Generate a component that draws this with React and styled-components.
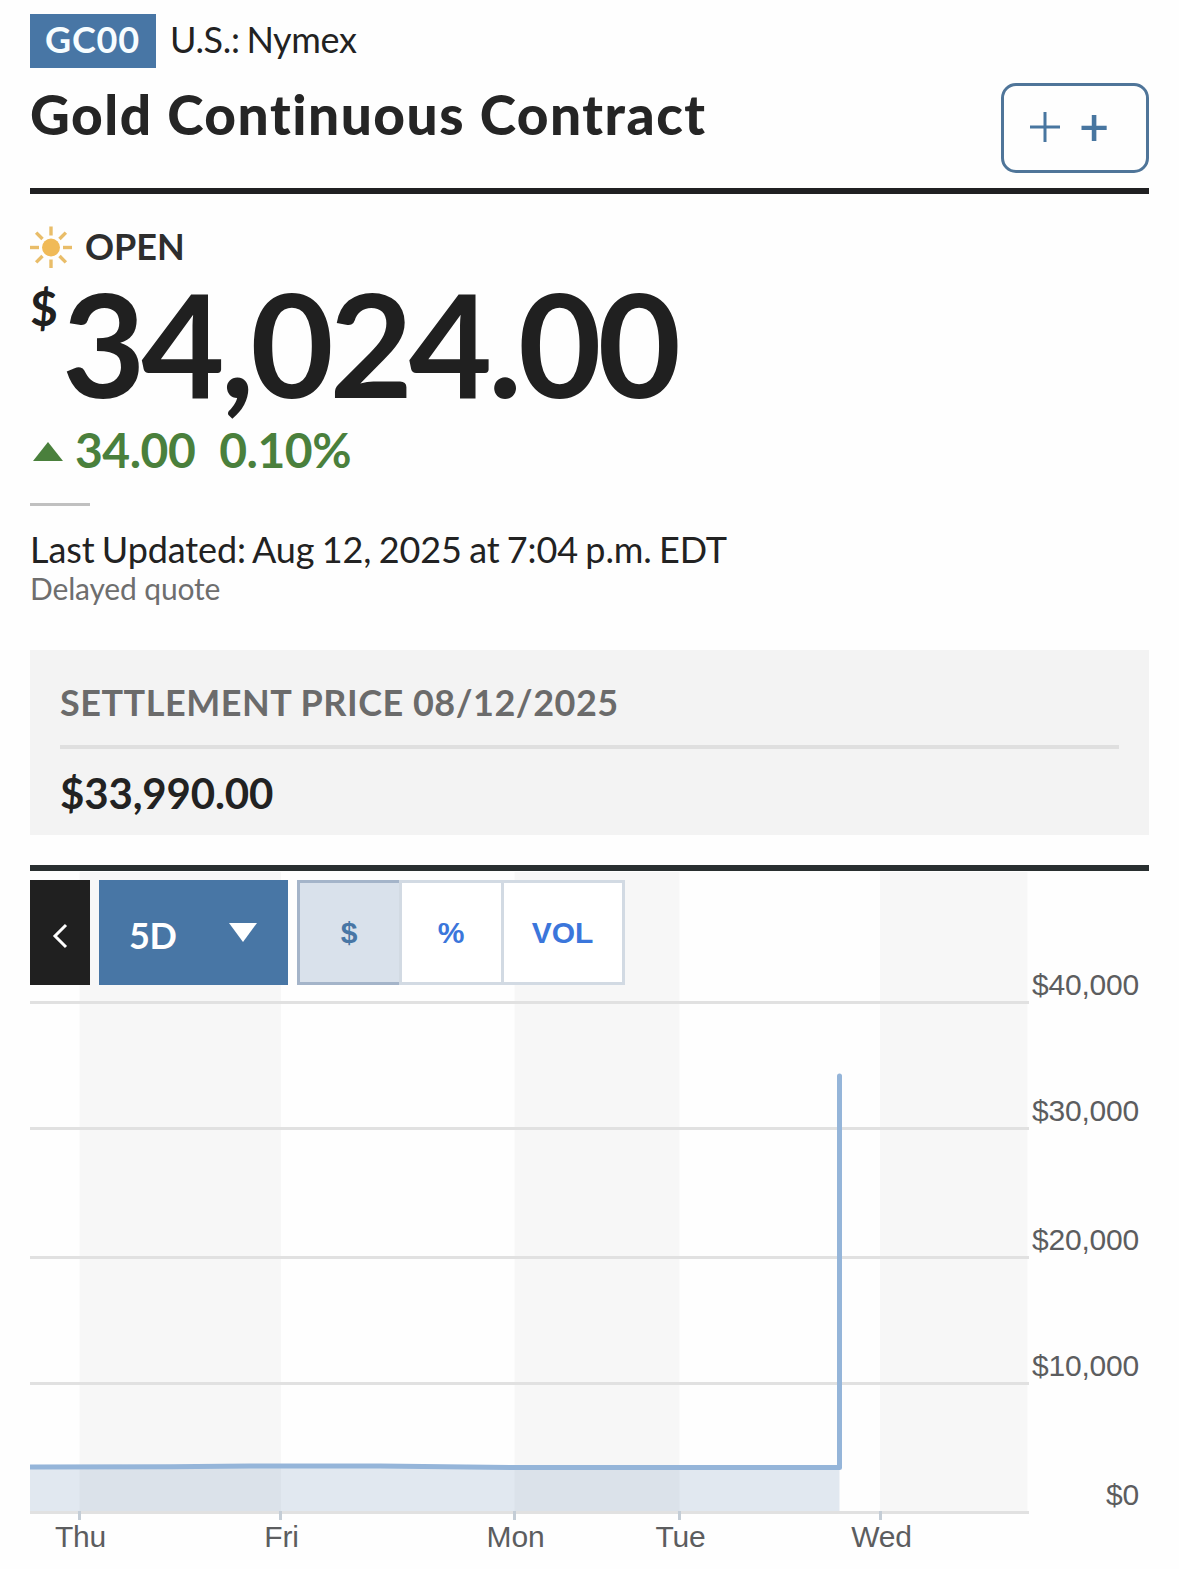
import React, { useState } from 'react';
import styled, { createGlobalStyle } from 'styled-components';

const GlobalStyle = createGlobalStyle`
  * {
    box-sizing: border-box;
  }

  body {
    margin: 0;
    background: #fefefe;
    color: #222222;
    font-family: Lato, sans-serif;
  }
`;

const Page = styled.main`
  display: flex;
  flex-direction: column;
  width: 1179px;
  height: 1569px;
  padding: 14px 30px 0;
  overflow: hidden;
`;

const SymbolRow = styled.div`
  display: flex;
  align-items: center;
  gap: 14px;
  height: 54px;
`;

const Ticker = styled.span`
  width: 126px;
  height: 54px;
  padding-left: 15px;
  background: #4876a5;
  color: #f7fdff;
  font-size: 36px;
  font-weight: 700;
  letter-spacing: 0.8px;
  line-height: 51px;
`;

const Exchange = styled.span`
  height: 54px;
  font-size: 36px;
  letter-spacing: -0.35px;
  line-height: 51px;
  word-spacing: -2px;
`;

const TitleRow = styled.div`
  display: flex;
  justify-content: space-between;
  height: 126px;
  padding-top: 15px;
  border-bottom: 6px solid #202022;
`;

const Title = styled.h1`
  margin: 0;
  color: #252525;
  font-size: 55px;
  font-weight: 900;
  letter-spacing: 1.5px;
  line-height: 62px;
  white-space: nowrap;
`;

const AddButton = styled.button`
  display: flex;
  align-items: center;
  gap: 19px;
  width: 148px;
  height: 90px;
  padding: 0 0 2px 26px;
  border: 3px solid #4f7599;
  border-radius: 15px;
  background: transparent;
  color: #4876a0;
  font: 600 52px/76px Lato, sans-serif;
`;

const AddText = styled.span`
  padding-bottom: 4px;
`;

const Status = styled.div`
  display: flex;
  align-items: center;
  gap: 13px;
  height: 42px;
  margin-top: 32px;
  color: #2e2e2e;
  font-size: 36px;
  font-weight: 700;
  line-height: 42px;
`;

const StatusText = styled.span`
  height: 44px;
`;

const PriceRow = styled.div`
  display: flex;
  height: 147px;
  margin-top: 3px;
  color: #202020;
`;

const Currency = styled.sup`
  width: 32px;
  font-size: 48px;
  font-weight: 700;
  line-height: 73px;
  vertical-align: top;
`;

const Price = styled.span`
  font-size: 144px;
  font-weight: 700;
  letter-spacing: -4.2px;
  line-height: 144px;
`;

const Change = styled.div`
  display: flex;
  align-items: center;
  height: 60px;
  padding: 3px 0 0 3px;
  color: #4a803c;
  font-size: 48px;
  font-weight: 700;
  letter-spacing: -0.5px;
  line-height: 60px;

  svg {
    margin-top: 4px;
  }
`;

const ChangeValue = styled.span`
  margin-left: ${props => props.$gap}px;
`;

const ShortRule = styled.div`
  width: 60px;
  height: 3px;
  margin-top: 25px;
  background: #c0c0c0;
`;

const Timestamp = styled.div`
  height: 45px;
  margin-top: 22px;
  font-size: 36px;
  letter-spacing: -0.1px;
  line-height: 43px;
  word-spacing: -1.8px;
`;

const Delayed = styled.div`
  height: 36px;
  color: #6e6e6e;
  font-size: 30px;
  letter-spacing: -0.15px;
  line-height: 30px;
`;

const Settlement = styled.section`
  display: flex;
  flex-direction: column;
  height: 185px;
  margin-top: 41px;
  padding: 30px 30px 0;
  background: #f3f3f3;
`;

const SettlementLabel = styled.div`
  flex-shrink: 0;
  height: 69px;
  border-bottom: 4px solid #dfdfdf;
  color: #6b6b6b;
  font-size: 36px;
  font-weight: 700;
  letter-spacing: 0.52px;
  line-height: 45px;
`;

const SettlementValue = styled.div`
  font-size: 42px;
  font-weight: 700;
  letter-spacing: -0.15px;
  line-height: 88px;
`;

const ChartSection = styled.section`
  display: grid;
  height: 704px;
  margin-top: 30px;
  border-top: 6px solid #292f30;
`;

const ChartSvg = styled.svg`
  grid-area: 1 / 1;
  width: 1149px;
  height: 698px;
  font-family: 'Liberation Sans', Arial, sans-serif;
  font-size: 30px;
  letter-spacing: -0.2px;
`;

const Toolbar = styled.div`
  grid-area: 1 / 1;
  display: flex;
  gap: 9px;
  height: 105px;
  margin-top: 9px;
  z-index: 1;
`;

const BackButton = styled.button`
  display: flex;
  align-items: center;
  justify-content: center;
  width: 60px;
  padding: 6px 0 0;
  border: 0;
  background: #202020;
`;

const RangeButton = styled.button`
  display: flex;
  align-items: center;
  justify-content: space-between;
  width: 189px;
  padding: 0 31px 0 30px;
  border: 0;
  background: #4876a5;
  color: #ffffff;
  font: 700 36px/99px Lato, sans-serif;
  letter-spacing: -0.3px;
`;

const RangeText = styled.span`
  padding-top: 6px;
`;

const ModeGroup = styled.div`
  display: flex;
`;

const ModeButton = styled.button`
  width: ${props => props.$width}px;
  padding: 0 ${props => props.$shift}px 0 0;
  border: 3px solid ${props => (props.$active ? '#a4b4c9' : '#d2dae3')};
  ${props => (props.$active ? 'border-right: 0;' : '')}
  ${props => (props.$joined ? 'margin-left: -3px;' : '')}
  background: ${props => (props.$active ? '#d9e1eb' : '#ffffff')};
  color: ${props => (props.$active ? '#4876a5' : '#3b76db')};
  font: 700 30px/99px 'Liberation Sans', Arial, sans-serif;
`;

const modes = [
    { id: '$', width: 105, shift: 4 },
    { id: '%', width: 105, shift: 1 },
    { id: 'VOL', width: 124, shift: 1 },
];

const closedHours = [
    { x: 49.5, width: 201.5 },
    { x: 484.5, width: 165 },
    { x: 850, width: 147.5 },
];

const prices = [
    { label: '$40,000', y: 131.5 },
    { label: '$30,000', y: 257.5 },
    { label: '$20,000', y: 386.5 },
    { label: '$10,000', y: 512.5 },
    { label: '$0', y: 641.5 },
];

const days = [
    { label: 'Thu', x: 49.5 },
    { label: 'Fri', x: 250.5 },
    { label: 'Mon', x: 484.5 },
    { label: 'Tue', x: 649.5 },
    { label: 'Wed', x: 850.5 },
];

const SunIcon = () => (
    <svg width="42" height="42" viewBox="0 0 42 42">
        <circle cx="21" cy="21.5" r="9" fill="#f0ba58" />
        <g stroke="#e9bd69" strokeWidth="3.4">
            {[0, 45, 90, 135, 180, 225, 270, 315].map(angle => (
                <path key={angle} d="M21 0V9" transform={`translate(0 0.5) rotate(${angle} 21 21)`} />
            ))}
        </g>
    </svg>
);

const PriceChart = () => (
    <ChartSvg viewBox="0 0 1149 698">
        {closedHours.map(({ x, width }) => (
            <rect key={x} x={x} y="1" width={width} height="640" fill="#f7f7f7" />
        ))}
        <path d="M0 596L220 595L480 596.5H809.5V640H0Z" fill="#4876a5" fillOpacity="0.16" />
        {prices.map(({ label, y }) => (
            <g key={label}>
                <path d={`M0 ${y}H999`} stroke="#e1e1e1" strokeWidth="3" />
                <text x="1109" y={y - 7.5} textAnchor="end" fill="#5c5d5f">{label}</text>
            </g>
        ))}
        <path
            d="M0 596L140 595.7L220 595H350L480 596.5H809.5V205"
            fill="none"
            stroke="#95b5d9"
            strokeWidth="5"
            strokeLinejoin="round"
        />
        <circle cx="809.5" cy="205" r="2.5" fill="#95b5d9" />
        {days.map(({ label, x }) => (
            <g key={label}>
                <path d={`M${x} 640V649`} stroke="#c4cdd6" strokeWidth="3" />
                <text x={x + 1} y="675.5" textAnchor="middle" fill="#5c5d5f">{label}</text>
            </g>
        ))}
    </ChartSvg>
);

export default function App() {
    const [mode, setMode] = useState('$');

    return (
        <Page>
            <GlobalStyle />
            <SymbolRow>
                <Ticker>GC00</Ticker>
                <Exchange>U.S.: Nymex</Exchange>
            </SymbolRow>
            <TitleRow>
                <Title>Gold Continuous Contract</Title>
                <AddButton>
                    <svg width="30" height="30" viewBox="0 0 30 30">
                        <path d="M15 0V30M0 15H30" stroke="currentColor" strokeWidth="3" />
                    </svg>
                    <AddText>+</AddText>
                </AddButton>
            </TitleRow>
            <Status>
                <SunIcon />
                <StatusText>OPEN</StatusText>
            </Status>
            <PriceRow>
                <Currency>$</Currency>
                <Price>34,024.00</Price>
            </PriceRow>
            <Change>
                <svg width="30" height="19" viewBox="0 0 30 19">
                    <path d="M15 0L30 19H0Z" fill="currentColor" />
                </svg>
                <ChangeValue $gap={12}>34.00</ChangeValue>
                <ChangeValue $gap={24}>0.10%</ChangeValue>
            </Change>
            <ShortRule />
            <Timestamp>Last Updated: Aug 12, 2025 at 7:04 p.m. EDT</Timestamp>
            <Delayed>Delayed quote</Delayed>
            <Settlement>
                <SettlementLabel>SETTLEMENT PRICE 08/12/2025</SettlementLabel>
                <SettlementValue>$33,990.00</SettlementValue>
            </Settlement>
            <ChartSection>
                <PriceChart />
                <Toolbar>
                    <BackButton>
                        <svg width="16" height="26" viewBox="0 0 16 26">
                            <path d="M14 2L3 13L14 24" fill="none" stroke="#ffffff" strokeWidth="3" />
                        </svg>
                    </BackButton>
                    <RangeButton>
                        <RangeText>5D</RangeText>
                        <svg width="28" height="19" viewBox="0 0 28 19">
                            <path d="M0 0H28L14 19Z" fill="currentColor" />
                        </svg>
                    </RangeButton>
                    <ModeGroup>
                        {modes.map(({ id, width, shift }, index) => (
                            <ModeButton
                                key={id}
                                $width={width}
                                $shift={shift}
                                $active={mode === id}
                                $joined={index > 0}
                                onClick={() => setMode(id)}
                            >
                                {id}
                            </ModeButton>
                        ))}
                    </ModeGroup>
                </Toolbar>
            </ChartSection>
        </Page>
    );
}
